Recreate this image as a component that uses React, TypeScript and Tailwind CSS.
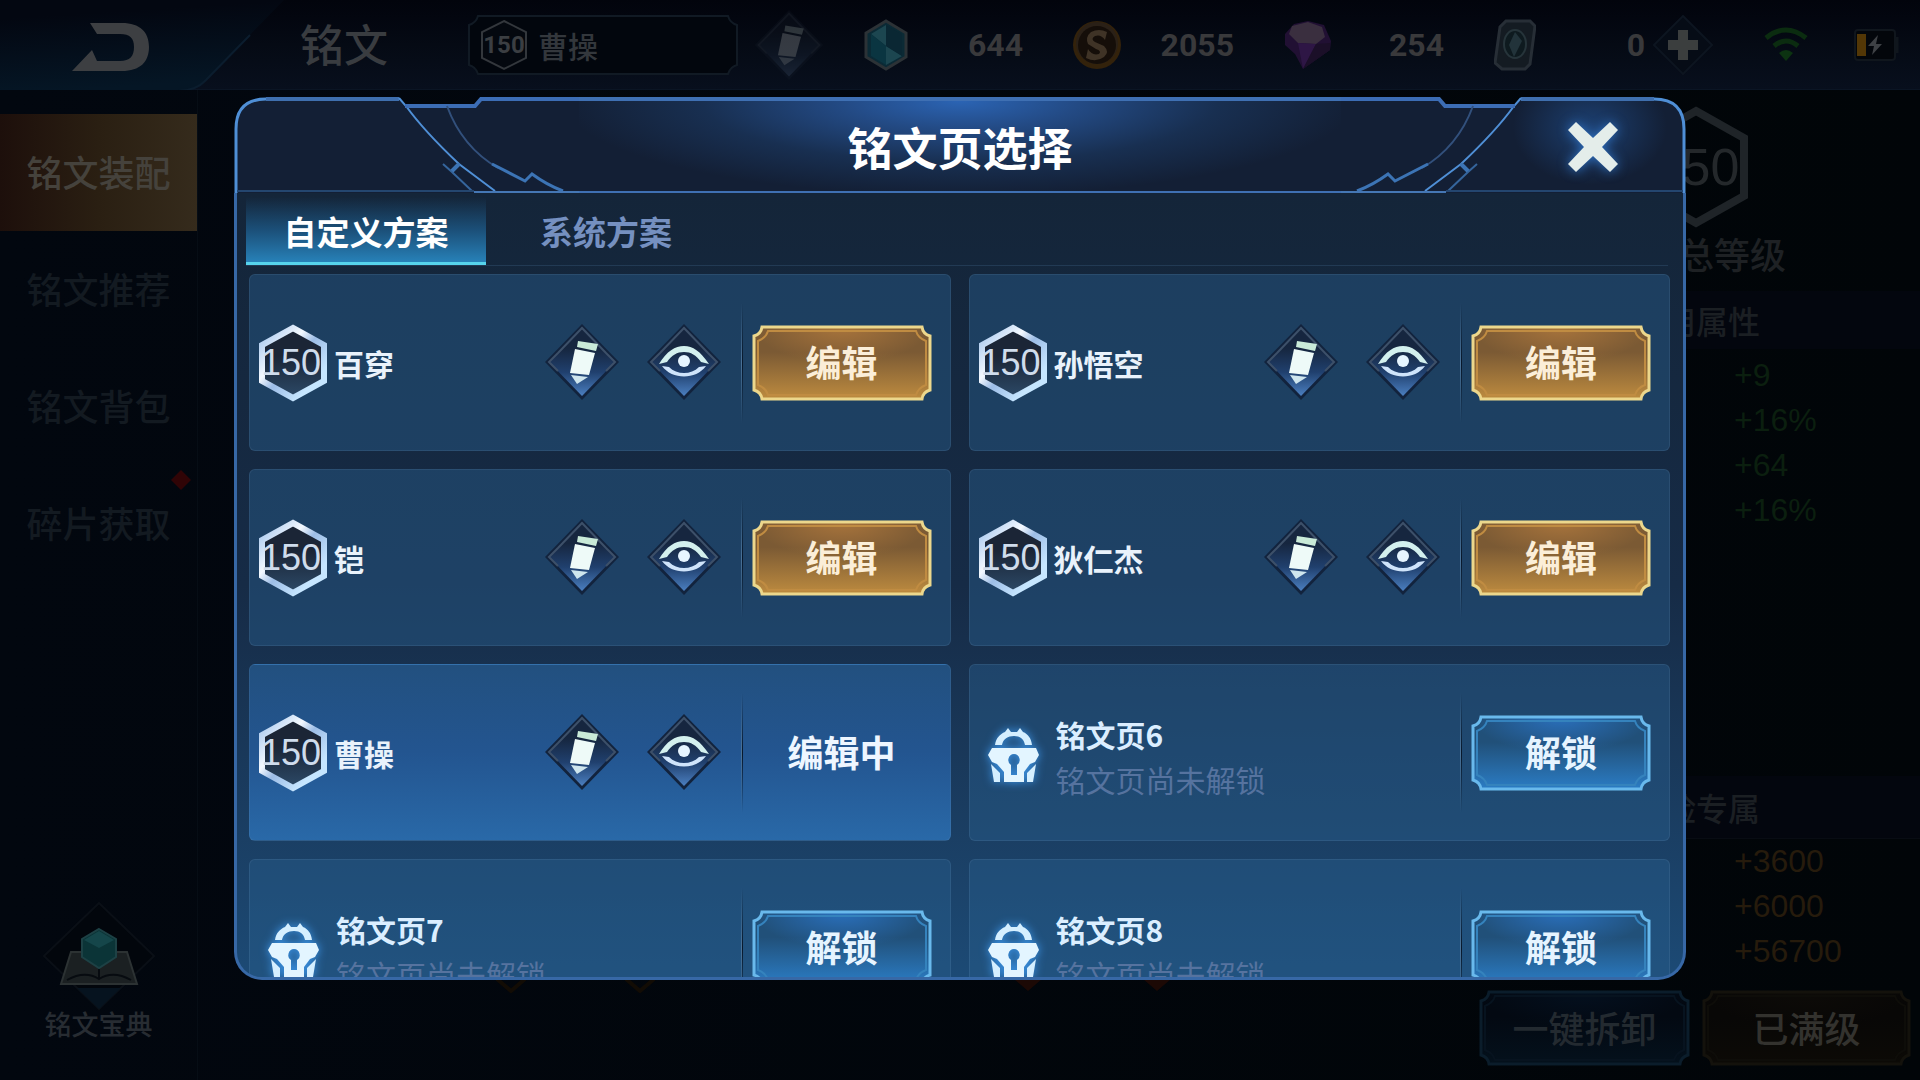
import React, { useState } from "react";

type Page = {
  id: number;
  name: string;
  locked?: boolean;
};

const pages: Page[] = [
  { id: 1, name: "百穿" },
  { id: 2, name: "孙悟空" },
  { id: 3, name: "铠" },
  { id: 4, name: "狄仁杰" },
  { id: 5, name: "曹操" },
  { id: 6, name: "铭文页6", locked: true },
  { id: 7, name: "铭文页7", locked: true },
  { id: 8, name: "铭文页8", locked: true },
];

const menu = ["铭文装配", "铭文推荐", "铭文背包", "碎片获取"];
const tabs = ["自定义方案", "系统方案"];

//Small icons
function PencilIcon({ className }: { className: string }) {
  return (
    <svg viewBox="0 0 76 78" className={className} aria-hidden="true">
      <defs>
        <linearGradient id="diamond" x1="0" y1="0" x2="0" y2="1">
          <stop offset="0.3" stopColor="#16263f" />
          <stop offset="0.65" stopColor="#20406e" />
          <stop offset="1" stopColor="#4b7fc0" />
        </linearGradient>
      </defs>
      <path d="M38 1 75 39 38 77 1 39Z" fill="#12233d" />
      <path d="M38 5 71 39 38 73 5 39Z" fill="url(#diamond)" />
      <path d="M14 30 5 39 14 48M62 30 71 39 62 48M14 30 38 5 62 30" fill="none" stroke="#3d5069" strokeWidth="2" />
      <path d="M34 18 54 21 52 28 33 24Z" fill="#c9ead8" />
      <path d="M31 26 51 30 45 52 26 50Z" fill="#eefaf8" />
      <path d="M27 52 44 54 33 61Z" fill="#cfe6ee" />
    </svg>
  );
}

function EyeIcon({ className }: { className: string }) {
  return (
    <svg viewBox="0 0 76 78" className={className} aria-hidden="true">
      <path d="M38 1 75 39 38 77 1 39Z" fill="#12233d" />
      <path d="M38 5 71 39 38 73 5 39Z" fill="url(#diamond)" />
      <path d="M14 30 5 39 14 48M62 30 71 39 62 48M14 30 38 5 62 30" fill="none" stroke="#3d5069" strokeWidth="2" />
      <path d="M13 41C21 28 29 23 38 23S54 28 63 41L55 39C50 32 45 29 38 29S26 32 21 39Z" fill="#d3f0ee" />
      <path d="M16 43 23 44C31 52 45 52 53 44L60 43C50 57 26 57 16 43Z" fill="#cfe4fb" />
      <circle cx="38" cy="38" r="6" fill="#e6f5ff" />
    </svg>
  );
}

function LockIcon() {
  return (
    <svg viewBox="0 0 55 60" className="h-[60px] w-[55px] drop-shadow-[0_0_5px_#3f9df5]" aria-hidden="true">
      <path
        d="M9 20C10 13 14 9 19 7L22 3 25 7H31L34 3 37 7C42 9 45 13 46 20L39 20C38 14 34 11 28 11S17 14 16 20Z"
        fill="#d5efff"
      />
      <path
        fillRule="evenodd"
        d="M6 23H50L53 30 49 37 44 39 38 47V57H18V47L11 39 6 37 2 30ZM28 29A6 6 0 0 0 25 40V50H31V40A6 6 0 0 0 28 29Z"
        fill="#e3f5ff"
      />
      <path d="M5 39 14 48V57H8ZM50 39 41 48V57H47Z" fill="#d5efff" />
    </svg>
  );
}

function Hexagon() {
  return (
    <div className="relative flex h-[78px] w-[68px] shrink-0 items-center justify-center">
      <svg viewBox="0 0 68 78" className="absolute inset-0 h-full w-full" aria-hidden="true">
        <defs>
          <linearGradient id="hexStroke" x1="0" y1="0" x2="1" y2="1">
            <stop offset="0.1" stopColor="#b9d3f2" />
            <stop offset="0.35" stopColor="#f4f9ff" />
            <stop offset="0.5" stopColor="#9dbde6" />
            <stop offset="0.8" stopColor="#c6e6ff" />
          </linearGradient>
          <linearGradient id="hexFill" x1="0" y1="0" x2="0" y2="1">
            <stop offset="0.4" stopColor="#1b2536" />
            <stop offset="1" stopColor="#2c4a68" />
          </linearGradient>
        </defs>
        <path d="M34 4 65 21V57L34 74 3 57V21Z" fill="url(#hexFill)" stroke="url(#hexStroke)" strokeWidth="6" />
      </svg>
      <span className="relative pr-1 font-[Liberation_Sans] text-[36px] leading-none text-[#cfdcec]">150</span>
    </div>
  );
}

//Button with cut corners
const tones = {
  gold: { glow: "#a8743c", top: "#7b5a34", bottom: "#bd8b3f", line: "#ecd78c", inner: "#c08c42" },
  blue: { glow: "#2a70bd", top: "#215079", bottom: "#2b7cc4", line: "#69b9ec", inner: "#3583bd" },
  dimBlue: { glow: "#04101f", top: "#030912", bottom: "#04111c", line: "#0b1d2b", inner: "#07131f" },
  dimGold: { glow: "#0d0b08", top: "#080706", bottom: "#0c0a06", line: "#14120c", inner: "#0e0d09" },
};

function OrnateButton({
  tone,
  width,
  className,
  children,
}: {
  tone: keyof typeof tones;
  width: number;
  className: string;
  children: React.ReactNode;
}) {
  const c = tones[tone];
  const w = width;
  return (
    <button
      type="button"
      className={`relative flex h-[76px] shrink-0 cursor-pointer items-center justify-center pb-[3px] text-[36px] leading-none ${className}`}
    >
      <svg viewBox={`0 0 ${w} 76`} className="absolute inset-0 h-full w-full" aria-hidden="true">
        <defs>
          <linearGradient id={`${tone}Fill`} x1="0" y1="0" x2="0" y2="1">
            <stop offset="0" stopColor={c.top} />
            <stop offset="0.35" stopColor={c.top} />
            <stop offset="1" stopColor={c.bottom} />
          </linearGradient>
          <radialGradient id={`${tone}Glow`} cx="0.5" cy="0" r="0.5">
            <stop offset="0" stopColor={c.glow} />
            <stop offset="1" stopColor={c.glow} stopOpacity="0" />
          </radialGradient>
        </defs>
        <path
          d={`M10 2H${w - 10}Q${w - 9} 9 ${w - 2} 11V65Q${w - 9} 67 ${w - 10} 74H10Q9 67 2 65V11Q9 9 10 2Z`}
          fill={`url(#${tone}Fill)`}
        />
        <path
          d={`M10 2H${w - 10}Q${w - 9} 9 ${w - 2} 11V65Q${w - 9} 67 ${w - 10} 74H10Q9 67 2 65V11Q9 9 10 2Z`}
          fill={`url(#${tone}Glow)`}
          stroke={c.line}
          strokeWidth="3"
        />
        <path
          d={`M16 6H${w - 16}Q${w - 14} 13 ${w - 6} 16V60Q${w - 14} 63 ${w - 16} 70H16Q14 63 6 60V16Q14 13 16 6Z`}
          fill="none"
          stroke={c.inner}
          strokeWidth="2"
        />
      </svg>
      <span className="relative">{children}</span>
    </button>
  );
}

//Top bar
function TopBar() {
  return (
    <header className="flex h-[90px] items-center border-b border-[#0b1524] bg-gradient-to-b from-[#02040c] via-[#050a14] to-[#080f1d] pr-5">
      <button type="button" aria-label="返回" className="h-[92px] w-[300px] shrink-0 self-start">
        <svg viewBox="0 0 300 92" className="h-full w-full">
          <defs>
            <linearGradient id="backFill" x1="0" y1="0" x2="0.2" y2="1">
              <stop offset="0.2" stopColor="#030711" />
              <stop offset="1" stopColor="#051625" />
            </linearGradient>
          </defs>
          <path d="M0 0H284L206 80Q196 91 178 91H0Z" fill="url(#backFill)" />
          <path d="M250 35 206 80Q196 91 178 91H60" fill="none" stroke="#0b1d2e" strokeWidth="2" />
          <path
            d="M90 23H122C140 23 149 32 149 47S140 71 122 71H72L92 50 97 61H120C130 61 134 56 134 47S130 34 120 34H97Z"
            fill="#3d3f42"
          />
        </svg>
      </button>
      <h1 className="w-[168px] shrink-0 pb-1 text-[44px] leading-none font-medium text-[#393c40]">铭文</h1>
      <div className="relative flex h-[60px] w-[270px] shrink-0 items-center gap-[10px] pl-3">
        <svg viewBox="0 0 270 60" className="absolute inset-0 h-full w-full" aria-hidden="true">
          <path d="M10 1H260Q262 8 269 10V50Q262 52 260 59H10Q8 52 1 50V10Q8 8 10 1Z" fill="#02060d" stroke="#111a24" strokeWidth="2" />
        </svg>
        <div className="relative flex h-[52px] w-[48px] items-center justify-center">
          <svg viewBox="0 0 48 52" className="absolute inset-0 h-full w-full" aria-hidden="true">
            <path d="M24 2 46 13V39L24 50 2 39V13Z" fill="#04080f" stroke="#33373c" strokeWidth="2" />
          </svg>
          <span className="relative font-[Roboto] text-2xl leading-none font-bold text-[#3b3e42]">150</span>
        </div>
        <span className="relative text-[30px] leading-none font-medium text-[#33373c]">曹操</span>
      </div>
      <button type="button" aria-label="改名" className="ml-[15px] shrink-0">
        <PencilIcon className="h-[72px] w-[72px] opacity-20 grayscale-[50%]" />
      </button>
      <div className="ml-[37px] flex shrink-0 items-center gap-[50px] font-[Roboto] text-[32px] leading-none font-bold text-[#39393b]">
        <div className="flex w-[161px] items-center justify-between">
          <svg viewBox="0 0 48 52" className="h-[52px] w-12" aria-hidden="true">
            <path d="M24 2 44 14V38L24 50 4 38V14Z" fill="#0b2a35" stroke="#2c3236" strokeWidth="3" />
            <path d="M24 6 9 15 24 27ZM24 27 40 37 24 46Z" fill="#1c4650" />
            <path d="M9 15 24 27V46L9 37Z" fill="#0a3541" />
            <path d="M24 6 40 15V37L24 27Z" fill="#0a2733" />
          </svg>
          <span>644</span>
        </div>
        <div className="flex w-[161px] items-center justify-between">
          <svg viewBox="0 0 48 52" className="h-[52px] w-12" aria-hidden="true">
            <circle cx="24" cy="26" r="24" fill="#33220b" />
            <circle cx="24" cy="24" r="21" fill="#2a2017" />
            <circle cx="24" cy="26" r="19" fill="#150e09" />
            <path
              d="M34 13 32 21Q28 15 22 17 17 20 22 23L31 27Q37 33 31 38 23 44 13 39L15 30Q19 37 26 35 29 32 23 30L15 25Q12 18 18 13 26 9 34 13Z"
              fill="#3f3326"
            />
          </svg>
          <span>2055</span>
        </div>
        <div className="flex w-40 items-center justify-between">
          <svg viewBox="0 0 48 52" className="h-[52px] w-12" aria-hidden="true">
            <path d="M10 5 24 2 40 6 47 22 46 31 19 50 11 35 1 26 1 15Z" fill="#211033" />
            <path d="M8 7 24 3 38 8 41 18 32 25 14 24 5 15Z" fill="#3a2f3f" />
            <path d="M14 24 32 25 19 50Z" fill="#2e1645" />
            <path d="M32 25 46 24 46 31 19 50Z" fill="#1b0f28" />
          </svg>
          <span>254</span>
        </div>
        <div className="flex w-[151px] items-center justify-between">
          <svg viewBox="0 0 42 52" className="h-[52px] w-[42px]" aria-hidden="true">
            <path d="M12 2H36L41 7 36 45 31 50H8L1 44 6 8Z" fill="#141b22" stroke="#272e36" strokeWidth="3" />
            <ellipse cx="21" cy="25" rx="11" ry="14" fill="#0e1a1f" stroke="#26343a" strokeWidth="2" />
            <path d="M21 13 28 22 20 38 15 26Z" fill="#22333a" />
          </svg>
          <span>0</span>
        </div>
      </div>
      <button type="button" aria-label="增加" className="ml-2 shrink-0">
        <svg viewBox="0 0 60 60" className="h-[60px] w-[60px]">
          <path d="M30 1 59 30 30 59 1 30Z" fill="#060c16" stroke="#0d1520" strokeWidth="2" />
          <path d="M25 15H35V25H45V35H35V45H25V35H15V25H25Z" fill="#3b3e3e" />
        </svg>
      </button>
      <div className="ml-auto flex items-center gap-[45px]">
        <svg viewBox="0 0 46 36" className="h-9 w-[46px]" aria-hidden="true">
          <path d="M3 11Q23-5 43 11M11 19Q23 9 35 19" fill="none" stroke="#0b2c10" strokeWidth="5" />
          <path d="M16 26Q23 20 30 26L23 34Z" fill="#0c3311" />
        </svg>
        <svg viewBox="0 0 46 32" className="h-8 w-[46px]" aria-hidden="true">
          <rect x="1" y="1" width="40" height="30" rx="3" fill="#03060b" stroke="#10161d" strokeWidth="2" />
          <path d="M43 8V24" stroke="#10161d" strokeWidth="3" />
          <rect x="3" y="5" width="9" height="22" fill="#533706" />
          <path d="M24 6 14 17H20L18 26 28 15H22Z" fill="#3e4145" />
        </svg>
      </div>
    </header>
  );
}

//Left menu
function SideMenu() {
  return (
    <nav className="flex w-[198px] shrink-0 flex-col border-r border-[#060d15] pt-6">
      {menu.map((item, i) => (
        <a
          key={item}
          href="#"
          className={`relative flex h-[117px] items-center justify-center pb-1 text-[36px] leading-none font-medium ${
            i === 0
              ? "bg-gradient-to-r from-[#1d0f0b] via-[#2a1f12] to-[#352b1c] text-[#45423c]"
              : "text-[#131a21]"
          }`}
        >
          {item}
          {item === "碎片获取" && (
            <svg viewBox="0 0 24 24" className="absolute top-[3px] right-1 h-6 w-6" aria-hidden="true">
              <path d="M12 2 22 12 12 22 2 12Z" fill="#300406" />
            </svg>
          )}
        </a>
      ))}
      <a href="#" className="mt-auto mb-[42px] flex flex-col items-center text-[27px] leading-7 font-medium text-[#272c32]">
        <svg viewBox="0 0 112 108" className="h-[108px] w-28" aria-hidden="true">
          <path d="M56 1 111 54 56 107 1 54Z" fill="#02060c" stroke="#0a0f16" strokeWidth="2" />
          <path d="M34 86H78L56 107Z" fill="#06131f" />
          <path d="M28 50H84L94 82H18Z" fill="#1b2022" stroke="#2c3233" strokeWidth="2" />
          <path d="M24 78Q42 68 56 77 70 68 88 78M56 60V77" fill="none" stroke="#070b10" strokeWidth="2" />
          <path d="M56 27 73 37V55L56 66 39 55V37Z" fill="#0b3437" stroke="#1d4145" strokeWidth="2" />
          <path d="M56 29 71 38 56 46 41 38Z" fill="#15464a" />
        </svg>
        铭文宝典
      </a>
    </nav>
  );
}

//Right attribute column
function Attributes() {
  return (
    <aside className="flex w-[448px] shrink-0 flex-col items-center pt-[15px]">
      <div className="relative flex h-[124px] w-[108px] items-center justify-center">
        <svg viewBox="0 0 108 124" className="absolute inset-0 h-full w-full" aria-hidden="true">
          <path d="M54 6 102 33V91L54 118 6 91V33Z" fill="none" stroke="#1f2428" strokeWidth="8" />
        </svg>
        <span className="relative font-[Liberation_Sans] text-[52px] leading-none text-[#24282b]">150</span>
      </div>
      <p className="mt-1 text-[36px] leading-10 font-medium text-[#1e2124]">铭文总等级</p>
      <h2 className="mt-[18px] w-full bg-[#03060e] text-center text-[32px] leading-[58px] font-medium text-[#1b1f23]">通用属性</h2>
      <ul className="mt-1 w-full pl-[262px] font-[Liberation_Sans] text-[32px] leading-[45px] text-[#0b1f0f]">
        <li>+9</li>
        <li>+16%</li>
        <li>+64</li>
        <li>+16%</li>
      </ul>
      <h2 className="mt-auto w-full border-b border-[#080c13] bg-[#03060e] text-center text-[32px] leading-[62px] font-medium text-[#1b1f23]">
        冒险专属
      </h2>
      <ul className="w-full pl-[262px] font-[Liberation_Sans] text-[32px] leading-[45px] text-[#261b0c]">
        <li>+3600</li>
        <li>+6000</li>
        <li>+56700</li>
      </ul>
      <div className="mt-4 mb-[14px] flex w-full justify-end gap-3 pr-[9px]">
        <OrnateButton tone="dimBlue" width={211} className="w-[211px] font-medium text-[#232a30]">
          一键拆卸
        </OrnateButton>
        <OrnateButton tone="dimGold" width={209} className="w-[209px] font-medium text-[#33322e]">
          已满级
        </OrnateButton>
      </div>
    </aside>
  );
}

//Cut corner of the dialog frame, mirrored for the right side
function FrameCorner({ className }: { className: string }) {
  return (
    <svg viewBox="0 0 345 96" className={`absolute inset-0 h-full w-full ${className}`} aria-hidden="true">
      <path d="M1 96V32Q1 2 32 2H165L172 9H242L247 2H345V96Z" fill="#131f35" />
      <g fill="none" stroke="#4f8fd6">
        <path d="M2 96V32Q2 2 32 2" strokeWidth="3" />
        <path d="M32 2H165" stroke="#3f6fae" strokeWidth="4" />
        <path d="M165 1 172 9Q190 34 225 67L261 94" strokeWidth="2" />
        <path d="M171 9H241L247 2H345" stroke="#3c6db5" strokeWidth="4" />
        <path d="M213 9Q228 50 264 71" stroke="#32507c" strokeWidth="2" />
        <path d="M258 67 291 84 298 77Q313 88 329 94" stroke="#3c74b5" strokeWidth="3" />
        <path d="M225 67 218 74M209 67 218 75 238 94" stroke="#35659c" strokeWidth="2" />
        <path d="M225 67 218 74" strokeWidth="4" stroke="#3c74b5" />
        <path d="M3 94H240" stroke="#24466f" strokeWidth="2" />
        <path d="M240 95H345" stroke="#4577b4" strokeWidth="2" />
      </g>
    </svg>
  );
}

function PageCard({ page, active, onEdit }: { page: Page; active: boolean; onEdit: () => void }) {
  return (
    <li
      className={`flex h-[177px] items-center rounded-md border border-[#7aa3c4]/15 pr-[18px] pl-[9px] ${
        active ? "bg-gradient-to-b from-[#22507f] via-[#235590] to-[#2969a8]" : "bg-[#285e8b]/45"
      }`}
    >
      {page.locked ? (
        <>
          <div className="flex w-[77px] justify-center pt-1 pr-2">
            <LockIcon />
          </div>
          <div className="flex flex-col pt-2 text-[30px] leading-[45px]">
            <h3 className="font-bold text-[#dbeeff]">{page.name}</h3>
            <p className="text-[#56739f]">铭文页尚未解锁</p>
          </div>
        </>
      ) : (
        <>
          <Hexagon />
          <h3 className="ml-[7px] text-[30px] leading-none font-bold text-[#e9f2fb]">{page.name}</h3>
          <div className="ml-auto flex gap-[26px] pb-[2px]">
            <button type="button" aria-label="改名" className="cursor-pointer">
              <PencilIcon className="h-[78px] w-[76px]" />
            </button>
            <button type="button" aria-label="预览" className="cursor-pointer">
              <EyeIcon className="h-[78px] w-[76px]" />
            </button>
          </div>
        </>
      )}
      <div className={`mr-[9px] flex h-[120px] shrink-0 ${page.locked ? "ml-auto" : "ml-[19px]"}`}>
        <span className="w-px bg-gradient-to-b from-transparent via-[#4a7297] to-transparent" />
        <span className="w-px bg-gradient-to-b from-transparent via-[#08172a] to-transparent" />
      </div>
      {active ? (
        <span className="w-[180px] pb-[3px] text-center text-[36px] leading-none font-bold text-[#eef6ff]">编辑中</span>
      ) : page.locked ? (
        <OrnateButton tone="blue" width={180} className="w-[180px] font-bold text-[#e6f4ff]">
          解锁
        </OrnateButton>
      ) : (
        <span className="flex" onClick={onEdit}>
          <OrnateButton tone="gold" width={180} className="w-[180px] font-bold text-[#fbeed8]">
            编辑
          </OrnateButton>
        </span>
      )}
    </li>
  );
}

//Main Function
export default function App() {
  const [tab, setTab] = useState(0);
  const [editing, setEditing] = useState(5);

  return (
    <div className="relative flex min-h-screen flex-col overflow-hidden bg-[#010409] font-['Noto_Sans_CJK_SC',sans-serif]">
      <TopBar />
      <main className="flex flex-1 justify-between bg-gradient-to-r from-[#02070f] to-[#010508]">
        <SideMenu />
        <Attributes />
      </main>

      <div className="absolute inset-0 flex flex-col px-[234px] pt-[97px] pb-[100px]">
        {/* tips of the rune slots showing below the dialog */}
        <svg viewBox="0 0 560 14" className="absolute bottom-[87px] left-[495px] h-[14px] w-[560px]" aria-hidden="true">
          <path d="M2 0 16 12 30 0M131 0 145 12 159 0" fill="none" stroke="#120c05" strokeWidth="4" />
          <path d="M519 0 533 12 547 0Z" fill="#1c0905" />
        </svg>
        <svg viewBox="0 0 30 14" className="absolute bottom-[87px] left-[1142px] h-[14px] w-[30px]" aria-hidden="true">
          <path d="M1 0 15 12 29 0Z" fill="#1c0905" />
        </svg>

        <section role="dialog" aria-label="铭文页选择" className="relative flex min-h-0 flex-1 flex-col">
          <div className="flex h-24 shrink-0">
            <div className="relative w-[345px] shrink-0">
              <FrameCorner className="" />
            </div>
            <div className="flex flex-1 items-center justify-center border-t-4 border-b-2 border-[#3f70b3] bg-[#131f35] bg-[radial-gradient(ellipse_52%_105%_at_50%_0%,#2b64b4_0%,#234a84_30%,#182f51_65%,#131f35_100%)]">
              <h2 className="text-[45px] leading-none font-bold text-white">铭文页选择</h2>
            </div>
            <div className="relative flex w-[345px] shrink-0 items-center justify-end pr-[67px]">
              <FrameCorner className="-scale-x-100" />
              <span className="absolute top-1 right-4 h-[86px] w-[160px] bg-[radial-gradient(ellipse_at_50%_30%,#1c3f70_0%,transparent_68%)]" />
              <button type="button" aria-label="关闭" className="relative mt-1 cursor-pointer">
                <svg viewBox="0 0 52 52" className="h-[52px] w-[52px] drop-shadow-[0_0_6px_#2f72c4]">
                  <path d="M9 1 26 17 43 1 51 9 35 26 51 43 43 51 26 35 9 51 1 43 17 26 1 9Z" fill="#e4edea" />
                </svg>
              </button>
            </div>
          </div>

          <div className="flex min-h-0 flex-1 flex-col overflow-hidden rounded-b-[28px] border-x-3 border-b-3 border-[#3768a6] bg-gradient-to-b from-[#142539] via-[#162b46] to-[#1c4a75]">
            <div role="tablist" className="mr-[15px] ml-[9px] flex h-[73px] shrink-0 border-b border-[#223a54] pt-1">
              {tabs.map((name, i) => (
                <button
                  key={name}
                  type="button"
                  role="tab"
                  aria-selected={tab === i}
                  onClick={() => setTab(i)}
                  className={`w-60 cursor-pointer border-b-3 pt-1 text-[33px] leading-none font-bold ${
                    tab === i
                      ? "border-[#56d3ec] bg-gradient-to-b from-transparent via-[#1b4f78] to-[#2781b8] text-white"
                      : "border-transparent text-[#7590c0]"
                  }`}
                >
                  {name}
                </button>
              ))}
            </div>
            <ul className="mt-2 grid min-h-0 flex-1 grid-cols-2 content-start gap-[18px] overflow-y-auto pr-[13px] pl-3 [scrollbar-width:none]">
              {pages.map((page) => (
                <PageCard key={page.id} page={page} active={page.id === editing} onEdit={() => setEditing(page.id)} />
              ))}
            </ul>
          </div>
        </section>
      </div>
    </div>
  );
}
